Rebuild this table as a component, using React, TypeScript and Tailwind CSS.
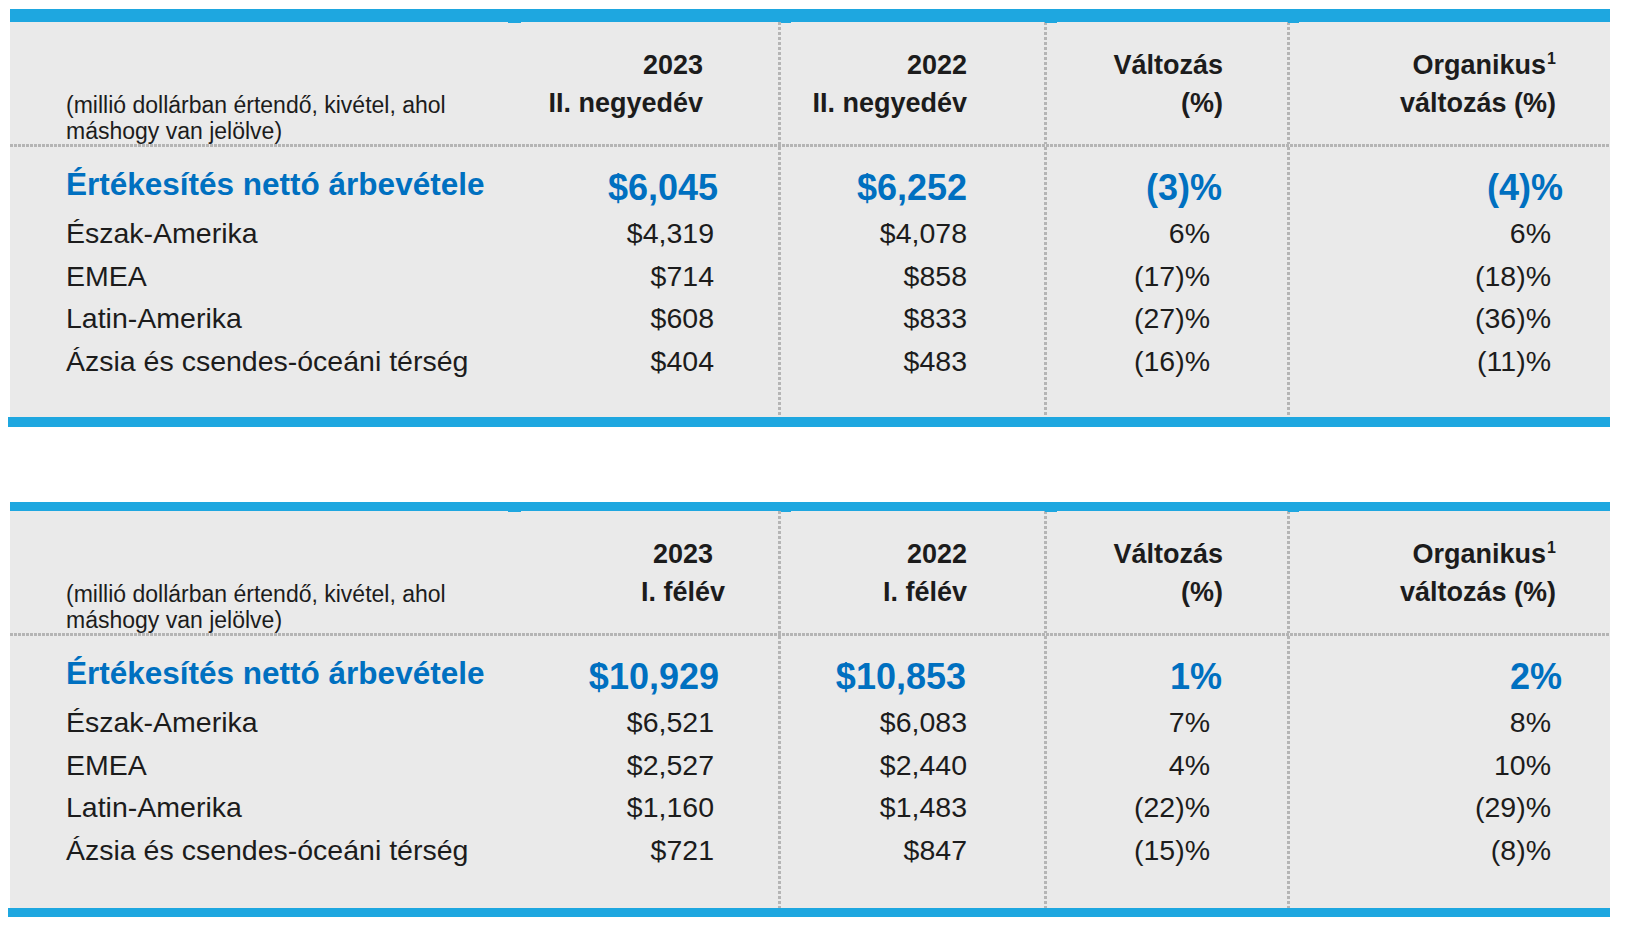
import React from "react";

interface TableProps {
  topBar: number;
  bottomBar: number;
  grayH: number;
  headerB: React.ReactNode;
  headerC: React.ReactNode;
  headerD: React.ReactNode;
  headerE: React.ReactNode;
  heading: [string, string, string, string];
  headingPr: [string, string, string, string];
  rows: { label: string; v: [string, string, string, string] }[];
}

const VDIV =
  "w-[3px] self-stretch bg-[repeating-linear-gradient(180deg,#b5b5b5_0px_3px,transparent_3px_5px)]";
const HDIV =
  "h-[3px] w-full bg-[repeating-linear-gradient(90deg,#b5b5b5_0px_3px,transparent_3px_4px)]";

const rowPr = ["pr-[64px]", "pr-[77px]", "pr-[77px]", "pr-[59px]"];
const colW = ["w-[263px]", "w-[263px]", "w-[240px]", "w-[320px]"];

function Sup() {
  return <span className="relative -top-[10px] ml-[1px] text-[16px] leading-none">1</span>;
}

function Table(p: TableProps) {
  const headers = [p.headerB, p.headerC, p.headerD, p.headerE];
  return (
    <div className="w-[1600px] ml-[10px]">
      <div className="bg-[#1ea7e0] w-full" style={{ height: p.topBar }} />
      <div className="relative h-0">
        <div className="absolute left-[498px] top-0 h-[1px] w-[13px] bg-[#1ea7e0]" />
        <div className="absolute left-[771px] top-0 h-[1px] w-[10px] bg-[#1ea7e0]" />
        <div className="absolute left-[1035px] top-0 h-[1px] w-[12px] bg-[#1ea7e0]" />
        <div className="absolute left-[1278px] top-0 h-[1px] w-[11px] bg-[#1ea7e0]" />
      </div>
      <div className="flex flex-col bg-[#eaeaea]" style={{ height: p.grayH }}>
        {/* header row */}
        <div className="flex h-[122px]">
          <div className="w-[505px] pl-[56px] pt-[70px] text-[23px] leading-[26px] text-[#1c1c1c] whitespace-nowrap">
            (millió dollárban értendő, kivétel, ahol
            <br />
            máshogy van jelölve)
          </div>
          {headers.map((h, i) => (
            <React.Fragment key={i}>
              {i > 0 && <div className={VDIV} />}
              <div className={`${colW[i]} flex justify-end pt-[24px] text-[27px] leading-[38px] font-bold text-[#1c1c1c] whitespace-nowrap`}>
                {h}
              </div>
            </React.Fragment>
          ))}
        </div>
        <div className={HDIV} />
        {/* body */}
        <div className="flex flex-1">
          <div className="w-[505px] pl-[56px] pt-[9.5px] whitespace-nowrap">
            <div className="h-[55.5px] leading-[55.5px] text-[31.5px] font-bold text-[#0070c0]">
              Értékesítés nettó árbevétele
            </div>
            {p.rows.map((r) => (
              <div key={r.label} className="h-[42.5px] leading-[42.5px] text-[28.5px] text-[#1c1c1c]">
                {r.label}
              </div>
            ))}
          </div>
          {[0, 1, 2, 3].map((i) => (
            <React.Fragment key={i}>
              {i > 0 && <div className={VDIV} />}
              <div className={`${colW[i]} pt-[9.5px] text-right whitespace-nowrap`}>
                <div className={`h-[55.5px] leading-[55.5px] pt-[3px] text-[36px] font-bold text-[#0070c0] ${p.headingPr[i]}`}>
                  {p.heading[i]}
                </div>
                {p.rows.map((r) => (
                  <div key={r.label} className={`h-[42.5px] leading-[42.5px] text-[28.5px] text-[#1c1c1c] ${rowPr[i]}`}>
                    {r.v[i]}
                  </div>
                ))}
              </div>
            </React.Fragment>
          ))}
        </div>
      </div>
      <div className="bg-[#1ea7e0] -ml-[2px] w-[1602px]" style={{ height: p.bottomBar }} />
    </div>
  );
}

export default function App() {
  return (
    <div className="w-[1625px] h-[928px] bg-white pt-[9px] font-['Liberation_Sans',Arial,sans-serif] overflow-hidden">
      <Table
        topBar={13}
        bottomBar={10}
        grayH={395}
        headerB={
          <div className="pr-[75px] text-right">
            2023
            <br />
            II. negyedév
          </div>
        }
        headerC={
          <div className="pr-[77px] text-right">
            2022
            <br />
            II. negyedév
          </div>
        }
        headerD={
          <div className="pr-[64px] text-right">
            Változás
            <br />
            (%)
          </div>
        }
        headerE={
          <div className="pr-[54px] text-right">
            Organikus
            <Sup />
            <br />
            változás (%)
          </div>
        }
        heading={["$6,045", "$6,252", "(3)%", "(4)%"]}
        headingPr={["pr-[60px]", "pr-[77px]", "pr-[65px]", "pr-[47px]"]}
        rows={[
          { label: "Észak-Amerika", v: ["$4,319", "$4,078", "6%", "6%"] },
          { label: "EMEA", v: ["$714", "$858", "(17)%", "(18)%"] },
          { label: "Latin-Amerika", v: ["$608", "$833", "(27)%", "(36)%"] },
          { label: "Ázsia és csendes-óceáni térség", v: ["$404", "$483", "(16)%", "(11)%"] },
        ]}
      />
      <div className="h-[75px]" />
      <Table
        topBar={9}
        bottomBar={9}
        grayH={397}
        headerB={
          <div className="pr-[53px] text-center">
            2023
            <br />
            I. félév
          </div>
        }
        headerC={
          <div className="pr-[77px] text-right">
            2022
            <br />
            I. félév
          </div>
        }
        headerD={
          <div className="pr-[64px] text-right">
            Változás
            <br />
            (%)
          </div>
        }
        headerE={
          <div className="pr-[54px] text-right">
            Organikus
            <Sup />
            <br />
            változás (%)
          </div>
        }
        heading={["$10,929", "$10,853", "1%", "2%"]}
        headingPr={["pr-[59px]", "pr-[78px]", "pr-[65px]", "pr-[48px]"]}
        rows={[
          { label: "Észak-Amerika", v: ["$6,521", "$6,083", "7%", "8%"] },
          { label: "EMEA", v: ["$2,527", "$2,440", "4%", "10%"] },
          { label: "Latin-Amerika", v: ["$1,160", "$1,483", "(22)%", "(29)%"] },
          { label: "Ázsia és csendes-óceáni térség", v: ["$721", "$847", "(15)%", "(8)%"] },
        ]}
      />
    </div>
  );
}
